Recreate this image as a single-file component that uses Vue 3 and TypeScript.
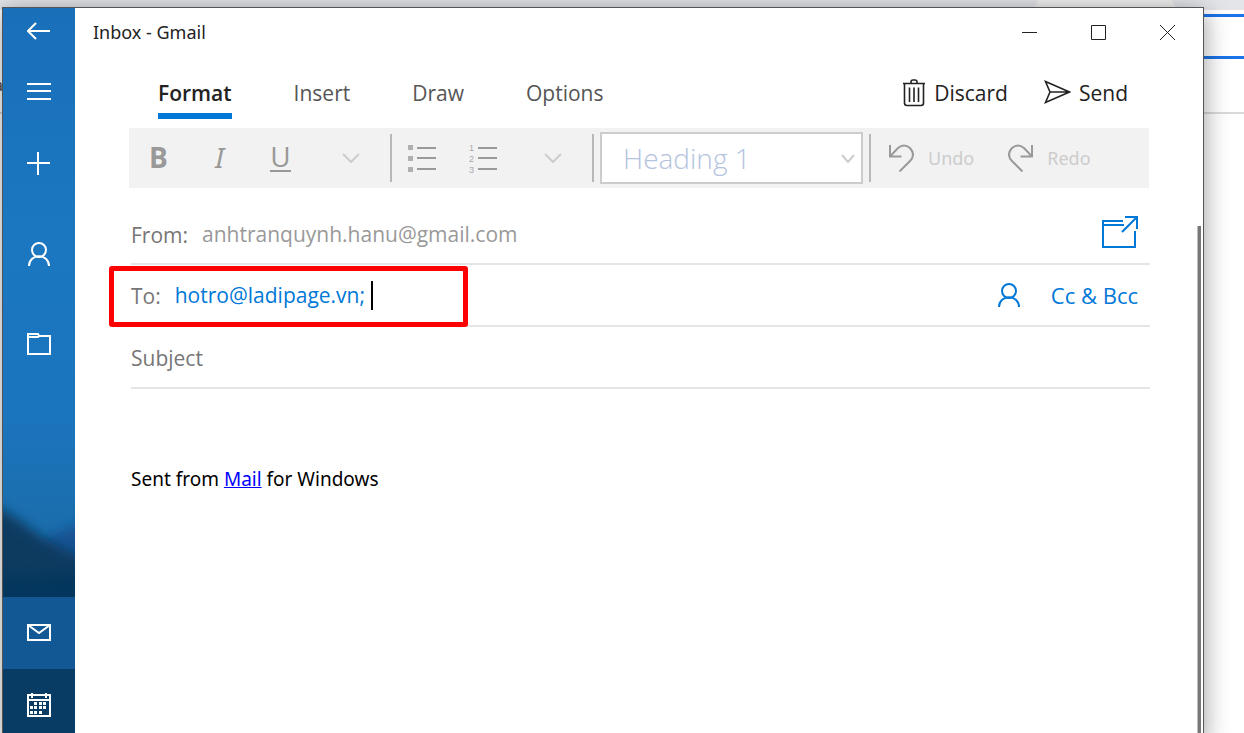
<script setup lang="ts">
import { ref } from 'vue'

const tabs = ['Format', 'Insert', 'Draw', 'Options']
const activeTab = ref('Format')
const recipients = ref('hotro@ladipage.vn;')
const subject = ref('')
const style = ref('Heading 1')
</script>

<template>
  <div class="desktop">
    <div class="browser" aria-hidden="true">
      <div class="strip">
        <svg class="tab-shape" width="148" height="10" viewBox="0 0 148 10"><path d="M0 10Q4 7 6 0H140Q142 7 148 10Z" fill="#f1f1f2" /></svg>
      </div>
      <div class="address"></div>
      <div class="rule"></div>
      <span class="letter">a</span>
    </div>

    <div class="window">
      <nav class="rail" aria-label="Mail navigation">
        <svg class="scene" viewBox="0 0 72 250" preserveAspectRatio="none" aria-hidden="true">
          <defs>
            <filter id="soft" x="-50%" y="-50%" width="200%" height="200%"><feGaussianBlur stdDeviation="6" /></filter>
          </defs>
          <path d="M30 60Q55 34 100 28V110H30Z" fill="#125392" filter="url(#soft)" />
          <path d="M-30 8Q0 16 20 32T60 58T110 72V280H-30Z" fill="#093a61" filter="url(#soft)" />
          <path d="M-30 90L100 80V280H-30Z" fill="#05355c" filter="url(#soft)" opacity=".7" />
        </svg>
        <button class="item back" aria-label="Back">
          <svg width="24" height="18" viewBox="0 0 24 18"><path d="M23 9H1M9 1L1 9L9 17" /></svg>
        </button>
        <button class="item" aria-label="Menu">
          <svg width="24" height="18" viewBox="0 0 24 18"><path d="M0 2H24M0 9H24M0 17H24" /></svg>
        </button>
        <button class="item" aria-label="New mail">
          <svg width="24" height="24" viewBox="0 0 24 24"><path d="M0 12H23M11 1V24" /></svg>
        </button>
        <button class="item accounts" aria-label="Accounts">
          <svg width="24" height="26" viewBox="0 0 24 26"><circle cx="12" cy="9" r="7" /><path d="M2 25C2 12 22 12 22 25" /></svg>
        </button>
        <button class="item folders" aria-label="Folders">
          <svg width="24" height="22" viewBox="0 0 24 22"><path d="M1 1H11L12 3H23V21H1ZM1 4H11L12 3" /></svg>
        </button>
        <div class="grow"></div>
        <button class="item mail" aria-label="Mail">
          <svg width="24" height="18" viewBox="0 0 24 18"><path d="M1 1H23V16H1ZM1 1L12 9L23 1" /></svg>
        </button>
        <button class="item calendar" aria-label="Calendar">
          <svg width="24" height="24" viewBox="0 0 24 24">
            <path d="M1 2H23V23H1ZM1 7H23M5 0V5M19 0V5" />
            <path class="dots" d="M7 9h3v3H7zM12 9h3v3h-3zM16 9h3v3h-3zM3 13h3v3H3zM7 13h3v3H7zM12 13h3v3h-3zM16 13h3v3h-3zM3 18h3v3H3zM7 18h3v3H7zM12 18h3v3h-3z" />
          </svg>
        </button>
      </nav>

      <main class="main">
        <header class="titlebar">
          <h1>Inbox - Gmail</h1>
          <div class="controls">
            <button aria-label="Minimize"><svg width="15" height="15" viewBox="0 0 15 15"><path d="M0 7.5H15" /></svg></button>
            <button aria-label="Maximize"><svg width="15" height="15" viewBox="0 0 15 15"><path d="M.5 .5H14.5V14.5H.5Z" /></svg></button>
            <button aria-label="Close"><svg width="15" height="15" viewBox="0 0 15 15"><path d="M0 0L15 15M15 0L0 15" /></svg></button>
          </div>
        </header>

        <div class="content">
          <div class="tabrow">
            <div class="tabs" role="tablist">
              <button
                v-for="tab in tabs"
                :key="tab"
                role="tab"
                class="tab"
                :class="{ active: tab === activeTab }"
                :aria-selected="tab === activeTab"
                @click="activeTab = tab"
              >{{ tab }}</button>
            </div>
            <div class="actions">
              <button>
                <svg width="24" height="28" viewBox="0 0 24 28"><path d="M1 4.5H23M2.500 4.500V24Q2.500 26.500 5 26.500H19Q21.500 26.500 21.500 24V4.500M9 4.500V3Q9 1 11 1H13Q15 1 15 3V4.500M7.500 8.500V23M12 8.500V23M16.500 8.500V23" /></svg>
                Discard
              </button>
              <button>
                <svg width="27" height="26" viewBox="0 0 27 26"><path d="M1.500 1.500L25.500 12L1.500 22.500L6 12ZM6 12H25" /></svg>
                Send
              </button>
            </div>
          </div>

          <div class="toolbar" role="toolbar" aria-label="Formatting">
            <button class="tool bold" disabled>B</button>
            <button class="tool italic" disabled>I</button>
            <button class="tool underline" disabled><span>U</span></button>
            <button class="tool more" disabled aria-label="More font options">
              <svg class="chev" width="18" height="10" viewBox="0 0 18 10"><path d="M1 1L9 9L17 1" /></svg>
            </button>
            <i class="sep"></i>
            <button class="tool list" disabled aria-label="Bullets">
              <svg width="28" height="28" viewBox="0 0 28 28">
                <path d="M9 4H28M9 14H28M9 25H28" /><path class="squares" d="M0 1h5v5H0zM0 12h5v5H0zM0 23h5v5H0z" />
              </svg>
            </button>
            <button class="tool list" disabled aria-label="Numbering">
              <svg width="28" height="34" viewBox="0 0 28 34">
                <path d="M9 7H28M9 17H28M9 28H28" />
                <text x="0" y="10">1</text><text x="0" y="21">2</text><text x="0" y="32">3</text>
              </svg>
            </button>
            <button class="tool more" disabled aria-label="More paragraph options">
              <svg class="chev" width="18" height="10" viewBox="0 0 18 10"><path d="M1 1L9 9L17 1" /></svg>
            </button>
            <i class="sep"></i>
            <label class="picker">
              <select v-model="style" disabled aria-label="Paragraph style">
                <option>Heading 1</option>
              </select>
              <svg class="chev" width="14" height="9" viewBox="0 0 14 9"><path d="M1 1L7 8L13 1" /></svg>
            </label>
            <i class="sep"></i>
            <button class="history" disabled>
              <svg width="25" height="28" viewBox="0 0 25 28"><path d="M1 1V12.500H12.500M1 12.500L9 4Q15 -1 21 4Q27 11 21 17L10.500 27.500" /></svg>
              Undo
            </button>
            <button class="history" disabled>
              <svg width="25" height="28" viewBox="0 0 25 28"><path d="M24 1V12.500H12.500M24 12.500L16 4Q10 -1 4 4Q-2 11 4 17L14.500 27.500" /></svg>
              Redo
            </button>
          </div>

          <form class="fields" @submit.prevent>
            <div class="row">
              <span class="from">From:</span>
              <span class="account">anhtranquynh.hanu@gmail.com</span>
              <button type="button" class="end popout" aria-label="Open in new window">
                <svg width="36" height="34" viewBox="0 0 36 34"><path d="M21 5H1V31H33V15M1 9H22M20 16L34 2M23 1H35V13" /></svg>
              </button>
            </div>
            <div class="row">
              <div class="highlight" aria-hidden="true"></div>
              <label class="label" for="to">To:</label>
              <input id="to" v-model="recipients" class="to" type="text" />
              <i class="caret"></i>
              <button type="button" class="end people" aria-label="Choose contacts">
                <svg width="24" height="26" viewBox="0 0 24 26"><circle cx="12" cy="9" r="7" /><path d="M2 25C2 12 22 12 22 25" /></svg>
              </button>
              <button type="button" class="copy">Cc &amp; Bcc</button>
            </div>
            <div class="row">
              <input v-model="subject" class="subject" type="text" placeholder="Subject" aria-label="Subject" />
            </div>
          </form>

          <p class="signature">Sent from <a href="#">Mail</a> for Windows</p>
        </div>
        <div class="scrollbar" aria-hidden="true"></div>
      </main>
    </div>
  </div>
</template>

<style>
html,
body {
  margin: 0;
  overflow: hidden;
}
</style>

<style scoped>
.desktop {
  position: relative;
  height: 100vh;
  overflow: hidden;
  background: #fff;
  font-family: 'Open Sans', 'Noto Sans', sans-serif;
  font-size: 21px;
}
.desktop * {
  box-sizing: border-box;
}
button,
input,
select {
  margin: 0;
  padding: 0;
  border: 0;
  outline: 0;
  background: none;
  color: inherit;
  font: inherit;
}
svg {
  display: block;
  flex: none;
  fill: none;
  stroke: currentColor;
  stroke-width: 2;
}
.browser {
  position: absolute;
  inset: 0;
}
.strip {
  height: 10px;
  background: #e3e5e9;
}
.tab-shape {
  margin-left: auto;
  margin-right: 64px;
  stroke: none;
}
.address {
  height: 45px;
  margin: 4px -20px 0 100px;
  border: 3px solid #1a73e8;
}
.rule {
  height: 2px;
  margin-top: 53px;
  background: #dadada;
}
.letter {
  position: absolute;
  top: 74px;
  left: -6px;
  color: #444;
  font-size: 16px;
}
.window {
  position: absolute;
  top: 7px;
  right: 40px;
  left: 2px;
  display: flex;
  height: calc(100vh + 2px);
  border: 1px solid #555;
  background: #fff;
  box-shadow: 0 4px 24px rgba(0, 0, 0, 0.4);
}
.rail {
  position: relative;
  display: flex;
  flex: none;
  flex-direction: column;
  width: 72px;
  overflow: hidden;
  background: linear-gradient(#1a6fb9, #1b77c0 30%, #1b75be 55%, #1b6ead 70%, #1b6aaa);
  color: #fff;
}
.scene {
  position: absolute;
  bottom: 0;
  left: 0;
  width: 72px;
  height: 250px;
  stroke: none;
}
.item {
  position: relative;
  display: flex;
  flex: none;
  align-items: center;
  justify-content: center;
  height: 72px;
}
.back {
  height: 47px;
  padding-bottom: 2px;
}
.accounts {
  margin-top: 19px;
}
.folders {
  margin-top: 18px;
}
.grow {
  flex: 1;
}
.mail {
  background: #125894;
}
.calendar {
  background: #093c65;
}
.dots {
  fill: #fff;
  stroke: none;
}
.main {
  position: relative;
  flex: 1;
  min-width: 0;
}
.titlebar {
  display: flex;
  align-items: center;
  justify-content: space-between;
  height: 48px;
  padding: 0 1px 0 18px;
  color: #222;
}
h1 {
  margin: 0;
  font-family: 'Noto Sans', sans-serif;
  font-size: 18px;
  font-weight: 400;
}
.controls {
  display: flex;
}
.controls button {
  display: flex;
  align-items: center;
  justify-content: center;
  width: 69px;
  height: 48px;
}
.controls svg {
  stroke-width: 1;
}
.content {
  padding: 0 54px;
}
.tabrow {
  display: flex;
  justify-content: space-between;
  height: 72px;
  padding: 11px 21px 9px 29px;
}
.tabs {
  display: flex;
  gap: 62px;
}
.tab {
  padding-top: 6px;
  border-bottom: 6px solid transparent;
  color: #555;
}
.active {
  border-color: #0078d7;
  color: #222;
  font-weight: 600;
}
.actions {
  display: flex;
  gap: 36px;
  color: #222;
}
.actions button {
  display: flex;
  gap: 8px;
  align-items: center;
}
.actions svg {
  stroke-width: 1.6;
}
.toolbar {
  display: flex;
  align-items: center;
  height: 60px;
  background: #f2f2f2;
  color: #999;
}
.tool {
  display: flex;
  flex: none;
  align-items: center;
  justify-content: center;
  width: 61px;
  height: 60px;
  padding: 0 2px 3px 0;
  font-size: 28px;
}
.tool text {
  fill: #aaa;
  stroke: none;
  font-family: 'Liberation Sans', sans-serif;
  font-size: 9px;
}
.bold {
  font-weight: 700;
}
.italic {
  font-family: 'Noto Sans', sans-serif;
  font-style: italic;
}
.underline span {
  border-bottom: 2px solid #999;
  line-height: 28px;
}
.list {
  padding-bottom: 0;
}
.more {
  width: 78px;
  padding: 0;
}
.chev {
  color: #ccc;
}
.squares {
  fill: #b0b0b0;
  stroke: none;
}
.sep {
  flex: none;
  width: 2px;
  height: 48px;
  background: #b8b8b8;
}
.picker {
  position: relative;
  width: 263px;
  margin: 0 6px;
}
.picker select {
  width: 100%;
  height: 52px;
  padding-left: 21px;
  border: 2px solid #ccc;
  background: #fff;
  color: #b4c3de;
  opacity: 1;
  font-size: 28px;
  font-weight: 300;
  appearance: none;
}
.picker svg {
  position: absolute;
  top: 22px;
  right: 8px;
}
.history {
  display: flex;
  gap: 14px;
  align-items: center;
  margin-left: 18px;
  color: #ccc;
  font-family: 'Noto Sans', sans-serif;
  font-size: 18px;
}
.history + .history {
  margin-left: 34px;
}
.history svg {
  color: #999;
}
.fields {
  margin: 15px -1px 0 2px;
  color: #767676;
}
.row {
  position: relative;
  display: flex;
  align-items: center;
  height: 62px;
  border-bottom: 2px solid #e5e5e5;
}
.from,
.label,
.account,
.subject {
  padding-top: 2px;
}
.from {
  padding-top: 4px;
}
.account {
  margin-left: 14px;
  color: #999;
}
.end {
  margin-left: auto;
}
.popout {
  margin-right: 12px;
  color: #0078d7;
}
.to {
  width: 190px;
  margin-left: 14px;
  color: #0078d7;
}
.caret {
  width: 2px;
  height: 29px;
  margin-left: 6px;
  background: #000;
}
.people,
.copy {
  color: #0078d7;
}
.copy {
  margin: 0 12px 0 30px;
  font-size: 22px;
}
.highlight {
  position: absolute;
  top: 1px;
  left: -22px;
  width: 359px;
  height: 61px;
  border: 5px solid #f00;
  border-radius: 3px;
  pointer-events: none;
}
.subject {
  flex: 1;
}
.subject::placeholder {
  color: #767676;
  opacity: 1;
}
.signature {
  margin: 76px 0 0 2px;
  color: #000;
  font-family: 'Noto Sans', sans-serif;
  font-size: 19px;
  line-height: 28px;
}
.signature a {
  color: #00f;
}
.scrollbar {
  position: absolute;
  top: 218px;
  right: 2px;
  bottom: 0;
  width: 4px;
  border-left: 1px solid #bbb;
  background: #777;
}
</style>
